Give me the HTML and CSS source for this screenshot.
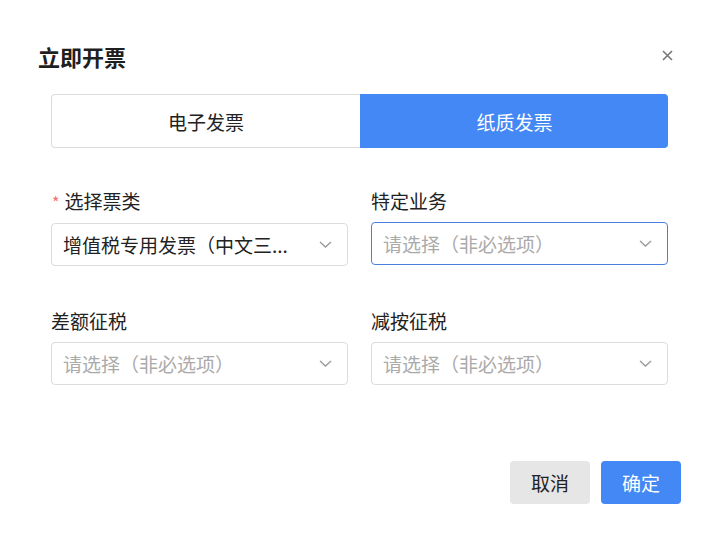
FILE: index.html
```html
<!DOCTYPE html>
<html lang="zh-cn">
<head>
    <meta charset="UTF-8">
    <meta name="viewport" content="width=device-width, initial-scale=1.0">
    <title>立即开票</title>
    <link rel="stylesheet" href="styles.css">
</head>
<body>
    <div class="dialog">
        <div class="dialog-header">
            <h2 class="dialog-title">立即开票</h2>
            <span class="close">
                <svg width="11" height="11" viewBox="0 0 11 11"><path d="M1 1L10 10M10 1L1 10" stroke="#777" stroke-width="1.6" fill="none"/></svg>
            </span>
        </div>
        <div class="dialog-body">
            <div class="tabs">
                <div class="tab">电子发票</div>
                <div class="tab active">纸质发票</div>
            </div>
            <div class="form-grid">
                <div class="field">
                    <label class="label"><span class="required">*</span>选择票类</label>
                    <div class="select">
                        <span class="value">增值税专用发票（中文三...</span>
                        <svg class="arrow" width="13" height="7" viewBox="0 0 13 7"><path d="M1 1L6.5 6L12 1" stroke="#999" stroke-width="1.3" fill="none"/></svg>
                    </div>
                </div>
                <div class="field">
                    <label class="label">特定业务</label>
                    <div class="select focus">
                        <span class="value placeholder">请选择（非必选项）</span>
                        <svg class="arrow" width="13" height="7" viewBox="0 0 13 7"><path d="M1 1L6.5 6L12 1" stroke="#999" stroke-width="1.3" fill="none"/></svg>
                    </div>
                </div>
                <div class="field">
                    <label class="label">差额征税</label>
                    <div class="select">
                        <span class="value placeholder">请选择（非必选项）</span>
                        <svg class="arrow" width="13" height="7" viewBox="0 0 13 7"><path d="M1 1L6.5 6L12 1" stroke="#999" stroke-width="1.3" fill="none"/></svg>
                    </div>
                </div>
                <div class="field">
                    <label class="label">减按征税</label>
                    <div class="select">
                        <span class="value placeholder">请选择（非必选项）</span>
                        <svg class="arrow" width="13" height="7" viewBox="0 0 13 7"><path d="M1 1L6.5 6L12 1" stroke="#999" stroke-width="1.3" fill="none"/></svg>
                    </div>
                </div>
            </div>
        </div>
        <div class="dialog-footer">
            <button class="btn btn-cancel">取消</button>
            <button class="btn btn-primary">确定</button>
        </div>
    </div>
</body>
</html>
```

FILE: styles.css
```css
body {
    margin: 0;
    padding: 0;
    background-color: #fff;
    font-family: "Noto Sans CJK SC", "Noto Sans", sans-serif;
    color: #222;
}
.dialog {
    padding: 41px 40px 0 38px;
}
.dialog-header {
    display: flex;
    justify-content: space-between;
    align-items: center;
    padding-right: 8px;
}
.dialog-title {
    margin: 0;
    font-size: 22px;
    line-height: 30px;
    font-weight: bold;
    color: #1f1f1f;
}
.close {
    display: flex;
    margin-top: -2px;
}
.dialog-body {
    width: 617px;
    margin: 23px 0 0 13px;
}
.tabs {
    display: grid;
    grid-template-columns: 309px 308px;
    height: 54px;
}
.tab {
    display: flex;
    align-items: center;
    justify-content: center;
    font-size: 19px;
    color: #222;
    border: 1px solid #dcdcdc;
    border-right: none;
    border-radius: 4px 0 0 4px;
}
.tab.active {
    background-color: #4388f5;
    border-color: #4388f5;
    color: #fff;
    border-radius: 0 4px 4px 0;
}
.form-grid {
    display: grid;
    grid-template-columns: 297px 297px;
    column-gap: 23px;
    row-gap: 43px;
    margin-top: 41px;
}
.label {
    display: block;
    font-size: 19px;
    line-height: 24px;
    margin-bottom: 9px;
    color: #222;
}
.required {
    color: #f56c6c;
    margin: 0 5px 0 1px;
    font-size: 16px;
}
.select {
    height: 43px;
    box-sizing: border-box;
    border: 1px solid #dcdcdc;
    border-radius: 4px;
    display: flex;
    align-items: center;
    padding: 0 15px 0 11px;
}
.select.focus {
    border-color: #4a7fe0;
}
.value {
    font-size: 19px;
    white-space: nowrap;
    color: #222;
}
.value.placeholder {
    color: #aaa;
}
.arrow {
    margin-left: auto;
}
.dialog-footer {
    display: flex;
    justify-content: flex-end;
    gap: 11px;
    margin-top: 76px;
}
.btn {
    width: 80px;
    height: 43px;
    border: none;
    border-radius: 4px;
    font-family: inherit;
    font-size: 19px;
    cursor: pointer;
}
.btn-cancel {
    background-color: #e6e6e6;
    color: #222;
}
.btn-primary {
    background-color: #4388f5;
    color: #fff;
}
```
